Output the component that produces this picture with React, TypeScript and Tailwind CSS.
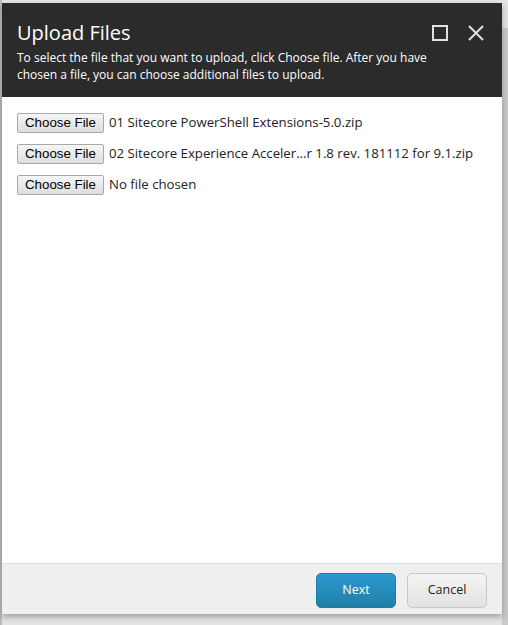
import React from 'react';

const files = [
    '01 Sitecore PowerShell Extensions-5.0.zip',
    '02 Sitecore Experience Acceler...r 1.8 rev. 181112 for 9.1.zip',
    'No file chosen',
];

const App = () => {
    return (
        <div className="w-[508px] h-[625px] bg-[#e4e4e4] relative overflow-hidden" style={{ fontFamily: '"Open Sans", sans-serif' }}>
            {/* page edges behind the dialog */}
            <div className="absolute left-0 top-0 w-[2px] h-full bg-[#bcbcbc]" />
            <div className="absolute right-0 top-[28px] w-[6px] h-full bg-[#c9c9c9]" />

            <div className="absolute left-[2px] top-[3px] w-[500px] h-[611px] bg-white flex flex-col shadow-[0_3px_6px_rgba(0,0,0,0.3)]">
                {/* Header */}
                <div className="bg-[#2b2b2b] h-[94px] px-[15px] pt-[16px] relative">
                    <h1 className="text-white text-[20px] leading-[28px]">Upload Files</h1>
                    <p className="text-white text-[12px] leading-[17px] mt-[2px] pr-[20px]">
                        To select the file that you want to upload, click Choose file. After you have chosen a file, you can choose additional files to upload.
                    </p>
                    <div className="absolute right-[18px] top-[22px] flex items-center gap-[20px]">
                        <svg width="16" height="16" viewBox="0 0 16 16">
                            <rect x="1" y="1" width="14" height="14" fill="none" stroke="#e0e0e0" strokeWidth="2" />
                        </svg>
                        <svg width="16" height="16" viewBox="0 0 16 16">
                            <path d="M1 1L15 15M15 1L1 15" stroke="#e0e0e0" strokeWidth="2" />
                        </svg>
                    </div>
                </div>

                {/* Body */}
                <div className="flex-1 px-[15px] pt-[16px] flex flex-col gap-[11px]">
                    {files.map((name, i) => (
                        <div key={i} className="flex items-center h-[20px]">
                            <button
                                className="h-[20px] px-[7px] bg-gradient-to-b from-[#f6f6f6] to-[#dedede] border border-[#a9a9a9] rounded-[2px] text-[13.3px] text-black leading-none"
                                style={{ fontFamily: '"Liberation Sans", Arial, sans-serif' }}
                            >
                                Choose File
                            </button>
                            <span className="ml-[5px] text-[13.2px] text-[#222]">{name}</span>
                        </div>
                    ))}
                </div>

                {/* Footer */}
                <div className="h-[51px] bg-[#efefef] border-t border-[#dedede] flex items-center justify-end gap-[11px] pr-[15px] pt-[2px]">
                    <button className="w-[80px] h-[35px] rounded-[5px] bg-gradient-to-b from-[#2c9ad0] to-[#1f7fa8] border border-[#1d7aa3] text-white text-[12.5px]">
                        Next
                    </button>
                    <button className="w-[80px] h-[35px] rounded-[5px] bg-gradient-to-b from-[#f4f4f4] to-[#e2e2e2] border border-[#c8c8c8] text-[#222] text-[12.5px]">
                        Cancel
                    </button>
                </div>
            </div>
        </div>
    );
};

export default App;
